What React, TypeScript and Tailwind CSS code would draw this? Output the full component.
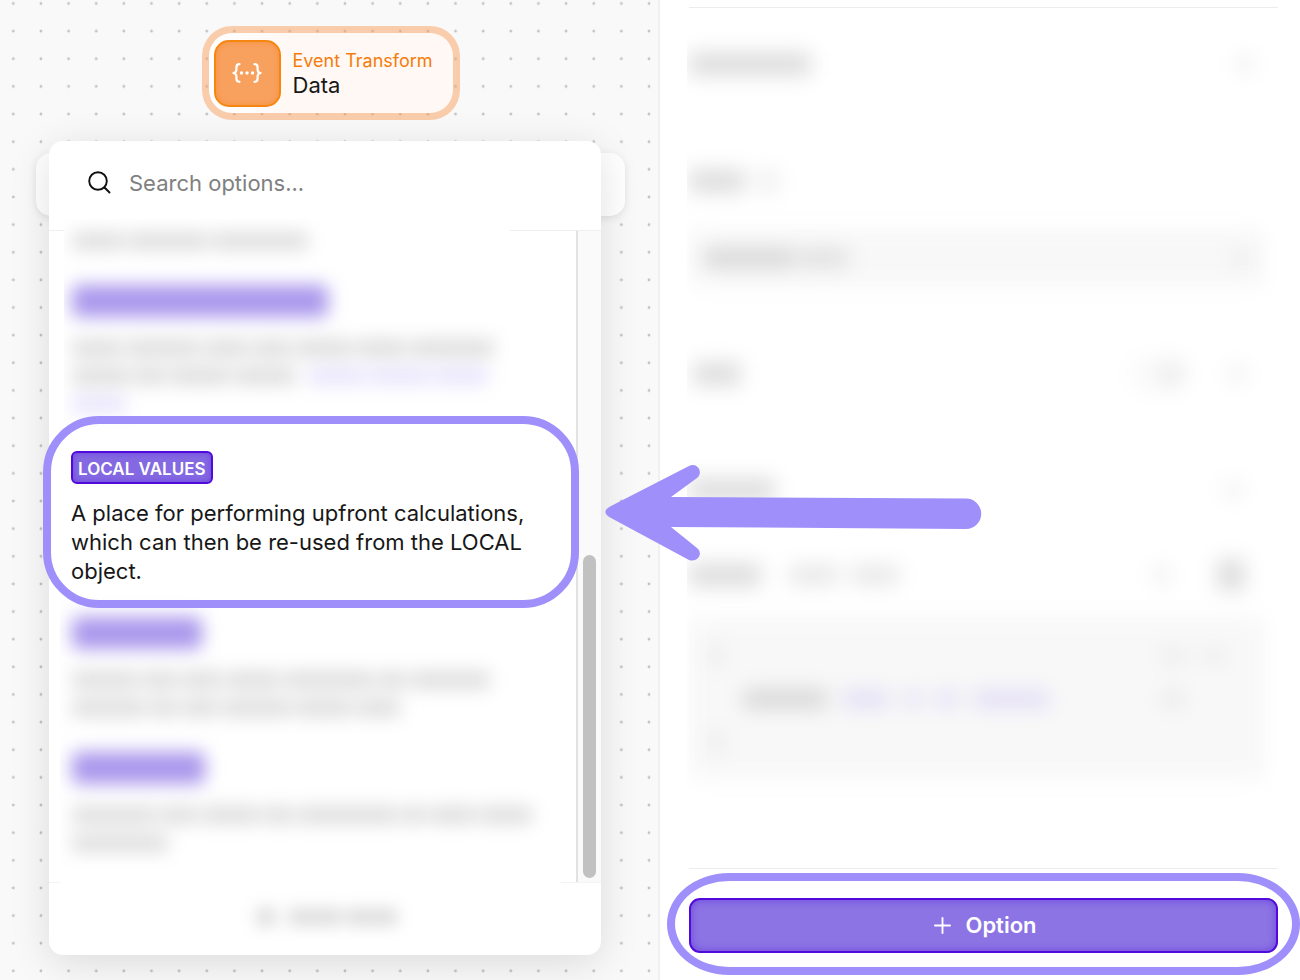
import React from "react";

type BarTone = "gray" | "soft" | "faint" | "lavender";

const TONES: Record<BarTone, string> = {
  gray: "bg-black/13",
  soft: "bg-black/9",
  faint: "bg-black/6",
  lavender: "bg-[#7c5cf0]/17",
};

function Bar({ width, tone = "gray", className = "h-[18px]" }: { width: number; tone?: BarTone; className?: string }) {
  return <span className={`block shrink-0 rounded-sm ${TONES[tone]} ${className}`} style={{ width }} />;
}

function Line({ words, tone = "gray" }: { words: number[]; tone?: BarTone }) {
  return (
    <div className="flex h-7 items-center gap-1">
      {words.map((w, i) => (
        <Bar key={i} width={w} tone={tone} />
      ))}
    </div>
  );
}

function Chip({ width }: { width: number }) {
  return <span className="block h-8 rounded-md bg-[#a997ec]" style={{ width }} />;
}

function DotGrid() {
  return (
    <svg className="absolute inset-0 h-full w-full" aria-hidden="true">
      <defs>
        <pattern id="dots" x="-0.5" y="-10.3" width="27.64" height="27.64" patternUnits="userSpaceOnUse">
          <circle cx="13.8" cy="13.8" r="1.4" fill="#c2c2c2" />
        </pattern>
      </defs>
      <rect width="100%" height="100%" fill="url(#dots)" />
    </svg>
  );
}

function EventNode() {
  return (
    <div className="relative flex h-[94px] w-[258px] items-center gap-3 self-center rounded-[30px] border-[7px] border-[#f9a15f]/50 bg-linear-to-r from-white to-[#fff8f4] to-35% bg-clip-padding pl-[5px]">
      <div className="flex h-[67px] w-[67px] items-center justify-center rounded-[15px] border-2 border-[#f6860f] bg-[#f8a15f] shadow-[inset_0_0_6px_#f6913c]">
        <svg width="30" height="20" viewBox="0 0 30 20" fill="none" stroke="#fff" strokeWidth="2.2" strokeLinecap="round" strokeLinejoin="round" aria-hidden="true">
          <path d="M7.5 1.2C4.8 1.2 4.4 2.4 4.4 4.5v2.2C4.4 8.6 3.4 9.6 1.4 10c2 .4 3 1.4 3 3.3v2.2c0 2.1.4 3.3 3.1 3.3" />
          <path d="M22.5 1.2c2.7 0 3.1 1.2 3.1 3.3v2.2c0 1.9 1 2.9 3 3.3-2 .4-3 1.4-3 3.3v2.2c0 2.1-.4 3.3-3.1 3.3" />
          <g fill="#fff" stroke="none">
            <circle cx="9.5" cy="10" r="1.7" />
            <circle cx="15" cy="10" r="1.7" />
            <circle cx="20.5" cy="10" r="1.7" />
          </g>
        </svg>
      </div>
      <div className="flex flex-col">
        <span className="text-lg leading-6 text-[#f57c0a]">Event Transform</span>
        <span className="text-[22px] leading-6 text-[#171717]">Data</span>
      </div>
    </div>
  );
}

function Arrow() {
  return (
    <svg className="pointer-events-none absolute top-[323px] left-full ml-1" width="378" height="98" viewBox="0 0 378 98" aria-hidden="true">
      <path
        d="M6 42L84 2C92 -2 99 8 92 14L66 33L361 34.5a15.2 15.2 0 0 1 0 30.4L66 63L92 84C99 90 92 99 84 96L6 54C-1.5 50-1.5 46 6 42Z"
        fill="#9f8ffa"
      />
    </svg>
  );
}

function OptionsMenu() {
  return (
    <div className="relative col-start-1 row-start-1 mr-6 ml-[13px] flex flex-col rounded-[14px] bg-white shadow-[0_8px_40px_rgba(0,0,0,0.12)]">
      <label className="flex h-[90px] items-center gap-[18px] border-b border-[#efefef] pb-[6px] pl-[39px]">
        <svg width="23" height="23" viewBox="0 0 23 23" fill="none" stroke="#111" strokeWidth="1.9" strokeLinecap="round" aria-hidden="true">
          <circle cx="10" cy="10" r="8.8" />
          <path d="M16.5 16.5l5 5" />
        </svg>
        <input
          type="text"
          aria-label="Search options"
          placeholder="Search options..."
          className="min-w-0 flex-1 bg-transparent text-[22px] leading-7 text-[#171717] outline-none placeholder:text-[#808080]"
        />
      </label>

      <div className="flex">
        <div className="min-w-0 flex-1">
          <div className="relative -mt-3 ml-[15px] max-w-[446px] overflow-hidden bg-white">
            <div className="pt-2 pb-3 pl-2 blur-[9px]" aria-hidden="true">
              <Line words={[52, 80, 96]} />
              <div className="mt-[30px] mb-[17px]">
                <Chip width={256} />
              </div>
              <Line words={[50, 74, 44, 40, 56, 50, 84]} />
              <div className="flex items-center gap-3">
                <Line words={[58, 32, 60, 62]} />
                <Line words={[58, 60, 54]} tone="lavender" />
              </div>
              <Line words={[54]} tone="lavender" />
            </div>
          </div>

          <section className="relative pt-[21px] pl-[22px]">
            <div className="pointer-events-none absolute -top-[14px] -right-[3px] -bottom-[22px] -left-[6px] z-10 rounded-[56px] border-8 border-[#9f8ffa]" />
            <h2 className="inline-flex h-[33px] items-center rounded-md border-2 border-[#5209dc] bg-[#8469e2] px-[5px] pt-[5px] text-[17px] font-semibold text-white shadow-[inset_0_0_6px_#6b45dc]">
              LOCAL VALUES
            </h2>
            <p className="mt-[15px] max-w-[490px] text-[22px] leading-[29px] text-[#171717]">
              A place for performing upfront calculations, which can then be re-used from the LOCAL object.
            </p>
          </section>

          <div className="ml-[11px] max-w-[500px] overflow-hidden bg-white">
            <div className="pt-[31px] pb-[25px] pl-3 blur-[9px]" aria-hidden="true">
              <Chip width={130} />
              <div className="mt-[17px] mb-[30px]">
                <Line words={[66, 36, 40, 54, 90, 28, 80]} />
                <Line words={[74, 28, 36, 70, 56, 44]} />
              </div>
              <Chip width={133} />
              <div className="mt-[17px]">
                <Line words={[84, 38, 58, 30, 100, 24, 46, 52]} />
                <Line words={[96]} />
              </div>
            </div>
          </div>
        </div>
        <div className="flex w-[25px] justify-center border-l-2 border-[#e2e2e2] bg-[#fafafa] pt-[324px] pb-1">
          <div className="w-[13px] rounded-full bg-[#c1c1c1]" />
        </div>
      </div>

      <div className="h-[73px] border-t border-[#f3f3f3]">
        <div className="relative -mt-px mr-10 ml-[11px] overflow-hidden bg-white">
          <div className="flex h-[58px] items-center gap-3 pt-3 pl-[196px] blur-[8px]" aria-hidden="true">
            <Bar width={20} className="h-5" />
            <div className="flex gap-1">
              <Bar width={54} />
              <Bar width={52} />
            </div>
          </div>
        </div>
      </div>

      <Arrow />
    </div>
  );
}

function SettingsPanel() {
  return (
    <aside className="flex min-w-0 flex-col bg-white pt-[7px] pr-[22px] pb-[27px] pl-[29px]">
      <div className="flex-1 border-y border-[#ececec]">
        <div className="-ml-[2px] overflow-hidden">
          <div className="pr-[13px] pb-5 pl-[2px] blur-[10px]" aria-hidden="true">
            <div className="flex h-28 items-center justify-between pr-3">
              <Bar width={122} className="h-6" />
              <Bar width={16} tone="faint" />
            </div>
            <div className="mt-[33px] flex h-14 items-center gap-3">
              <Bar width={56} className="h-6" />
              <Bar width={22} tone="faint" className="h-6" />
            </div>
            <div className="mt-5 flex h-[58px] items-center justify-between rounded-lg bg-[#f8f8f8] px-[15px]">
              <div className="flex gap-1">
                <Bar width={90} className="h-5" />
                <Bar width={50} tone="soft" className="h-5" />
              </div>
              <Bar width={18} tone="faint" className="h-3" />
            </div>
            <div className="mt-[59px] flex h-14 items-center gap-10 pr-5 pl-1">
              <Bar width={48} className="h-6" />
              <span className="ml-auto flex h-9 w-[60px] justify-end rounded-full bg-black/2 p-1">
                <span className="h-7 w-7 rounded-full bg-black/5" />
              </span>
              <Bar width={16} tone="faint" />
            </div>
            <div className="mt-[60px] flex h-14 items-center justify-between pr-6">
              <Bar width={86} className="h-6" />
              <Bar width={16} tone="faint" />
            </div>
            <div className="mt-[29px] flex h-14 items-center pr-5">
              <Bar width={72} className="h-6" />
              <div className="ml-7 flex gap-3">
                <Bar width={50} tone="soft" className="h-5" />
                <Bar width={48} tone="soft" className="h-5" />
              </div>
              <Bar width={16} tone="faint" className="ml-auto h-5" />
              <Bar width={28} className="ml-12 h-8" />
            </div>
            <div className="mt-[14px] flex h-[163px] justify-between rounded-lg bg-[#f8f8f8] py-[17px] pr-10 pl-[22px]">
              <div className="flex flex-col">
                <div className="flex h-[43px] items-center">
                  <Bar width={12} tone="faint" className="h-6" />
                </div>
                <div className="flex h-[43px] items-center gap-4 pl-8">
                  <Bar width={84} className="h-5" />
                  <Bar width={46} tone="lavender" />
                  <Bar width={16} tone="lavender" />
                  <Bar width={20} tone="lavender" />
                  <Bar width={76} tone="lavender" />
                </div>
                <div className="flex h-[43px] items-center">
                  <Bar width={12} tone="faint" className="h-6" />
                </div>
              </div>
              <div className="flex w-16 flex-col">
                <div className="flex h-[43px] items-center gap-4">
                  <Bar width={26} tone="faint" className="h-3" />
                  <Bar width={22} tone="faint" className="h-3" />
                </div>
                <div className="flex h-[43px] items-center">
                  <Bar width={24} tone="faint" className="h-4" />
                </div>
              </div>
            </div>
          </div>
        </div>
      </div>

      <div className="relative mt-[29px]">
        <button
          type="button"
          className="flex h-[55px] w-full items-center justify-center gap-[14px] rounded-[11px] border-2 border-[#5209dc] bg-[#8d74e4] pl-1 text-[22px] font-semibold text-white shadow-[inset_0_0_8px_#6b45dc]"
        >
          <svg width="17" height="17" viewBox="0 0 18 18" stroke="#fff" strokeWidth="2" strokeLinecap="round" aria-hidden="true">
            <path d="M9 1v16M1 9h16" />
          </svg>
          Option
        </button>
        <div className="pointer-events-none absolute -inset-x-[22px] -top-[25px] -bottom-[22px] rounded-[62px/51px] border-8 border-[#9f8ffa]" />
      </div>
    </aside>
  );
}

export default function App() {
  return (
    <div className="grid min-h-screen grid-cols-[minmax(0,33fr)_minmax(0,32fr)] bg-white font-['Inter',sans-serif]">
      <main className="relative z-10 flex flex-col gap-[21px] border-r-2 border-[#f0f0f0] bg-[#f9f9f9] pt-[26px] pr-[33px] pb-[25px] pl-9">
        <DotGrid />
        <EventNode />
        <div className="relative grid">
          <div className="col-start-1 row-start-1 mt-3 h-[63px] rounded-[15px] bg-white shadow-[0_2px_8px_rgba(0,0,0,0.1)]" />
          <OptionsMenu />
        </div>
      </main>
      <SettingsPanel />
    </div>
  );
}
